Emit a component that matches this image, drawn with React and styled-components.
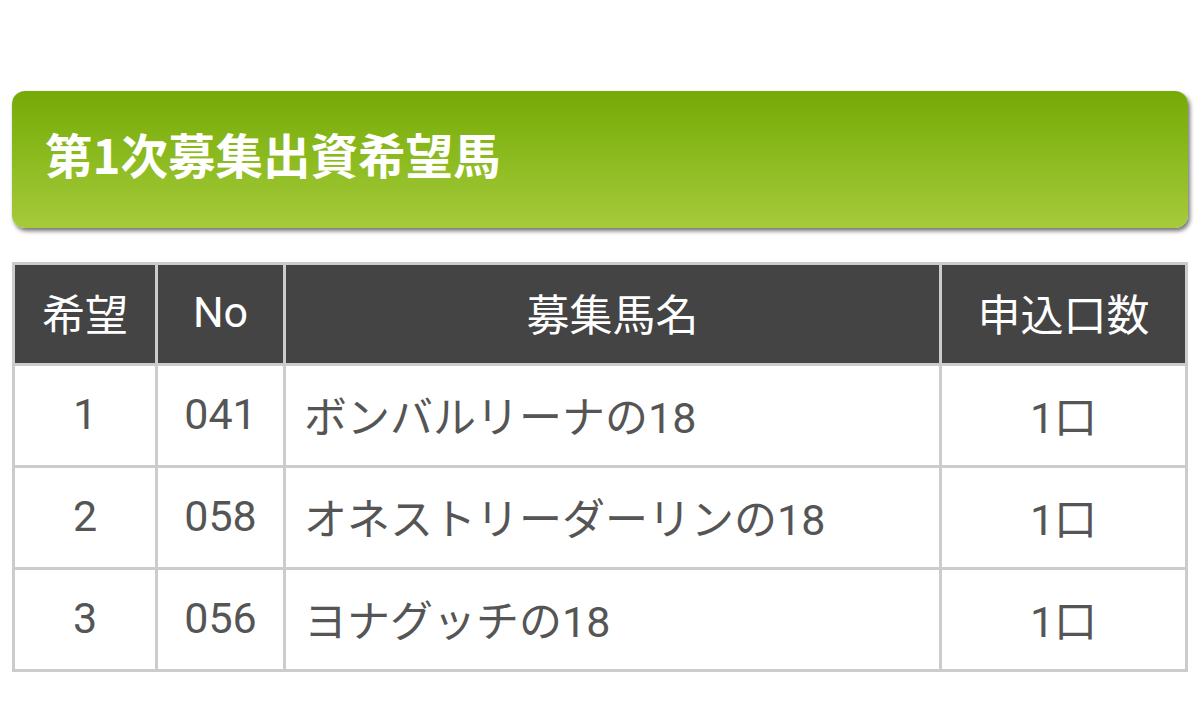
import React from 'react';
import styled, { createGlobalStyle } from 'styled-components';

const GlobalStyle = createGlobalStyle`
  html, body {
    margin: 0;
    padding: 0;
    background: #ffffff;
  }
  body {
    font-family: Roboto, "Noto Sans CJK JP", sans-serif;
  }
`;

const Page = styled.div`
  padding: 91px 12px 0 12px;
`;

const TitleBar = styled.div`
  display: flex;
  align-items: center;
  height: 137px;
  padding: 0 0 12px 33px;
  box-sizing: border-box;
  border-radius: 13px;
  background: linear-gradient(to bottom, #76aa07 0%, #8cbb20 50%, #a6ca3b 100%);
  box-shadow: 2px 3px 4px rgba(0, 0, 0, 0.55);
`;

const Title = styled.h2`
  margin: 0;
  color: #ffffff;
  font-family: "Noto Sans CJK JP", sans-serif;
  font-weight: 700;
  font-size: 47.5px;
  line-height: 1;
`;

const Table = styled.table`
  margin-top: 34px;
  width: 1176px;
  table-layout: fixed;
  border-collapse: collapse;
  border: 3px solid #cccccc;
  font-size: 43px;
`;

const Col = styled.col`
  width: ${props => props.w}px;
`;

const Th = styled.th`
  height: 94px;
  padding: 0 0 4px 0;
  background: #444444;
  color: #ffffff;
  font-weight: 400;
  text-align: center;
  border: 3px solid #cccccc;
`;

const Td = styled.td`
  height: 95px;
  padding: 0 0 4px ${props => (props.left ? 18 : 0)}px;
  color: #555555;
  text-align: ${props => (props.left ? 'left' : 'center')};
  border: 3px solid #cccccc;
  white-space: nowrap;
`;

const rows = [
  { rank: 1, no: '041', name: 'ボンバルリーナの18', count: '1口' },
  { rank: 2, no: '058', name: 'オネストリーダーリンの18', count: '1口' },
  { rank: 3, no: '056', name: 'ヨナグッチの18', count: '1口' },
];

export default function App() {
  return (
    <Page>
      <GlobalStyle />
      <TitleBar>
        <Title>第1次募集出資希望馬</Title>
      </TitleBar>
      <Table>
        <colgroup>
          <Col w={143} />
          <Col w={128} />
          <Col w={656} />
          <Col w={246} />
        </colgroup>
        <thead>
          <tr>
            <Th>希望</Th>
            <Th>No</Th>
            <Th>募集馬名</Th>
            <Th>申込口数</Th>
          </tr>
        </thead>
        <tbody>
          {rows.map(r => (
            <tr key={r.no}>
              <Td>{r.rank}</Td>
              <Td>{r.no}</Td>
              <Td left>{r.name}</Td>
              <Td>{r.count}</Td>
            </tr>
          ))}
        </tbody>
      </Table>
    </Page>
  );
}
